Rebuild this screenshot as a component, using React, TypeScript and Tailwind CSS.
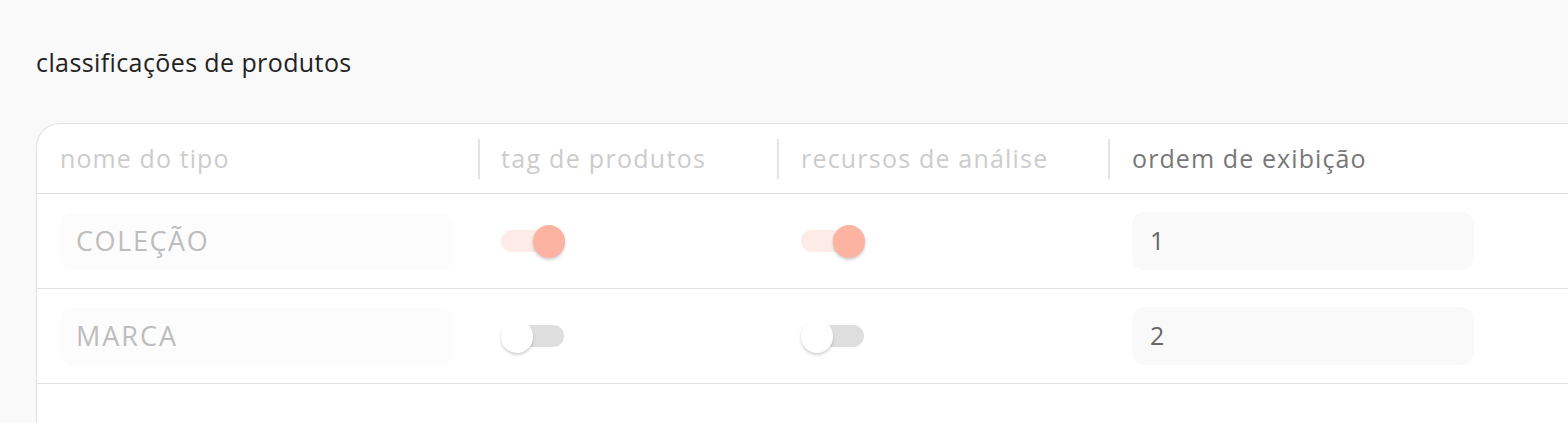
import React from "react";

type Row = { name: string; tag: boolean; analysis: boolean; order: number };

const rows: Row[] = [
  { name: "COLEÇÃO", tag: true, analysis: true, order: 1 },
  { name: "MARCA", tag: false, analysis: false, order: 2 },
];

function Toggle({ on }: { on: boolean }) {
  return (
    <div className="relative h-[33px] w-[64px] flex items-center">
      <div
        className={
          on
            ? "h-[22px] w-[63px] rounded-full bg-[#fdebe7]"
            : "h-[22px] w-[63px] rounded-full bg-[#dedede]"
        }
      />
      <div
        className={
          on
            ? "absolute right-0 top-0 h-[33px] w-[32px] rounded-full bg-[#fcb3a2] shadow-[0_2px_3px_rgba(0,0,0,0.18)]"
            : "absolute left-0 top-0 h-[33px] w-[32px] rounded-full bg-white shadow-[0_2px_3px_rgba(0,0,0,0.18)]"
        }
      />
    </div>
  );
}

export default function App() {
  return (
    <div className="min-h-[423px] w-full overflow-hidden bg-[#f9f9f9] font-['Open_Sans',sans-serif]">
      <div className="pl-[36px] pt-[46px]">
        <h1 className="text-[25px] leading-[32px] tracking-[0.4px] text-[#222222]">classificações de produtos</h1>
        <div className="mt-[45px] rounded-tl-[24px] border-l border-t border-[#e2e2e2] bg-white h-[320px]">
          <div className="grid grid-cols-[441px_299px_331px_1fr] h-[70px] border-b border-[#e2e2e2] text-[25px]">
            <div className="flex items-center pl-[23px] tracking-[1.1px] text-[#cccccc]">nome do tipo</div>
            <div className="flex items-center text-[#cccccc]">
              <div className="h-[40px] w-[2px] bg-[#e4e4e4]" />
              <span className="pl-[21px] tracking-[1.3px]">tag de produtos</span>
            </div>
            <div className="flex items-center text-[#cccccc]">
              <div className="h-[40px] w-[2px] bg-[#e4e4e4]" />
              <span className="pl-[22px] tracking-[1.2px]">recursos de análise</span>
            </div>
            <div className="flex items-center text-[#777777]">
              <div className="h-[40px] w-[2px] bg-[#e4e4e4]" />
              <span className="pl-[22px] tracking-[1.1px]">ordem de exibição</span>
            </div>
          </div>
          {rows.map((r) => (
            <div
              key={r.name}
              className="grid grid-cols-[441px_299px_331px_1fr] h-[95px] items-center border-b border-[#e2e2e2]"
            >
              <div className="pl-[23px]">
                <div
                  className={
                    r.order === 1
                      ? "flex h-[57px] w-[393px] items-center rounded-[12px] bg-[#fcfcfc] pl-[16px] text-[27px] tracking-[1.6px] text-[#bdbdbd]"
                      : "flex h-[57px] w-[393px] items-center rounded-[12px] bg-[#fcfcfc] pl-[16px] text-[27px] tracking-[2px] text-[#bdbdbd]"
                  }
                >
                  {r.name}
                </div>
              </div>
              <div className="pl-[23px]">
                <Toggle on={r.tag} />
              </div>
              <div className="pl-[24px]">
                <Toggle on={r.analysis} />
              </div>
              <div className="pl-[24px]">
                <div className="flex h-[58px] w-[342px] items-center rounded-[12px] bg-[#f9f9f9] pl-[18px] text-[25px] text-[#666666]">
                  {r.order}
                </div>
              </div>
            </div>
          ))}
        </div>
      </div>
    </div>
  );
}
